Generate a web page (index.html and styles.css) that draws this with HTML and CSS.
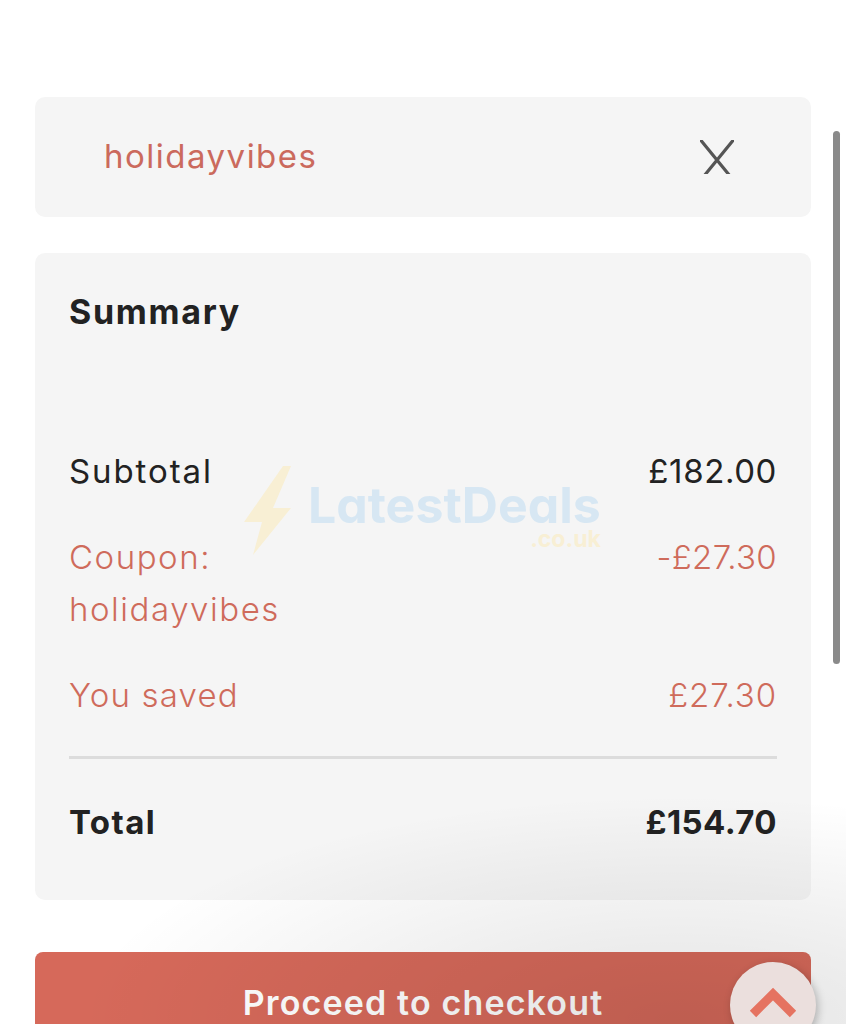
FILE: index.html
```html
<!DOCTYPE html>
<html lang="en">
<head>
<meta charset="utf-8">
<title>Summary</title>
<link rel="stylesheet" href="styles.css">
</head>
<body>
<main class="page">
  <section class="card coupon">
    <span class="coupon-code">holidayvibes</span>
    <svg class="close" viewBox="0 0 34 34" aria-label="Remove"><path d="M-1 -2 L30 36 M35 -2 L4 36"/></svg>
  </section>
  <section class="card summary">
    <h2 class="title">Summary</h2>
    <div class="rows">
      <div class="row"><span class="sub-label">Subtotal</span><span class="sub-val">£182.00</span></div>
      <div class="row accent"><span class="coupon-label">Coupon:<br>holidayvibes</span><span class="discount">-£27.30</span></div>
      <div class="row accent"><span class="saved-label">You saved</span><span class="saved-val">£27.30</span></div>
    </div>
    <hr class="rule">
    <div class="row total"><span class="total-label">Total</span><span class="total-val">£154.70</span></div>
  </section>
  <button class="checkout">Proceed to checkout</button>
</main>
<div class="scrollbar"></div>
<div class="watermark">
  <svg class="bolt" viewBox="0 0 47 90"><path d="M39 1 L47 1 L29 43 L47 43 L9 90 L18 57 L0 57 Z"/></svg>
  <div class="wm-text"><span class="wm-name">LatestDeals</span><span class="wm-tld">.co.uk</span></div>
</div>
<div class="shade"></div>
<div class="to-top">
  <svg viewBox="0 0 48 32"><path d="M4 28 L24 8 L44 28"/></svg>
</div>
</body>
</html>
```
FILE: styles.css
```css
html, body {
  margin: 0;
  height: 100%;
  overflow: hidden;
  background: #fff;
}
body {
  position: relative;
  font-family: Inter, "Open Sans", sans-serif;
  color: #222;
}
.page {
  padding: 97px 35px 0;
  display: flex;
  flex-direction: column;
}
.card {
  background: #f5f5f5;
  border-radius: 10px;
}
.coupon {
  height: 120px;
  display: flex;
  align-items: center;
  justify-content: space-between;
  padding: 0 77px 0 69px;
  box-sizing: border-box;
}
.coupon-code {
  font-size: 33px;
  font-weight: 400;
  letter-spacing: 1.5px;
  color: #cb6a5d;
  position: relative;
  top: -1px;
}
.close {
  width: 34px;
  height: 34px;
  fill: none;
  stroke: #555;
  stroke-width: 3.2;
  overflow: hidden;
}
.summary {
  margin-top: 36px;
  height: 647px;
  box-sizing: border-box;
  padding: 33px 34px 0;
}
.title {
  margin: 0;
  font-size: 34px;
  line-height: 52px;
  font-weight: 700;
  letter-spacing: 1.7px;
  color: #222;
}
.rows {
  margin-top: 107px;
  display: flex;
  flex-direction: column;
  gap: 34px;
}
.row {
  display: flex;
  justify-content: space-between;
  font-size: 33px;
  line-height: 52px;
  font-weight: 300;
  color: #222;
}
.sub-label { font-weight: 400; letter-spacing: 1.9px; }
.sub-val { font-weight: 400; letter-spacing: 0.6px; }
.accent { color: #cf6b5b; }
.coupon-label { letter-spacing: 1.55px; }
.saved-label { letter-spacing: 1.2px; }
.discount { letter-spacing: 0.3px; }
.saved-val { letter-spacing: 0.9px; }
.rule {
  margin: 35px 0 0;
  border: 0;
  height: 3px;
  background: #dcdcdc;
}
.total {
  margin-top: 37px;
  font-weight: 700;
}
.total-label { letter-spacing: 1.4px; }
.total-val { letter-spacing: 0.4px; }
.checkout {
  margin-top: 52px;
  height: 110px;
  border: 0;
  border-radius: 8px;
  background: #d6695a;
  color: #fff;
  font: 600 34px Inter, sans-serif;
  letter-spacing: 1.15px;
  padding: 0 0 9px;
  display: block;
  width: 100%;
}
.scrollbar {
  position: absolute;
  left: 833px;
  top: 131px;
  width: 7px;
  height: 533px;
  border-radius: 4px;
  background: #8a8a8a;
}
.watermark {
  position: absolute;
  left: 244px;
  top: 465px;
  display: flex;
  gap: 17px;
}
.bolt {
  flex: none;
  width: 47px;
  height: 90px;
  fill: #f8efd4;
}
.wm-text {
  display: flex;
  flex-direction: column;
  align-items: flex-end;
  margin-top: 19px;
}
.wm-name {
  font-size: 50px;
  line-height: 42px;
  font-weight: 700;
  font-feature-settings: "cv11";
  color: #d7e7f3;
  white-space: nowrap;
}
.wm-tld {
  font-size: 23px;
  line-height: 18px;
  margin-top: 4px;
  font-weight: 700;
  color: #f8efd4;
}
.shade {
  position: absolute;
  left: 0;
  top: 0;
  right: 0;
  bottom: 0;
  pointer-events: none;
  background: radial-gradient(ellipse 600px 225px at 680px 1020px, rgba(0,0,0,0.11), rgba(0,0,0,0.05) 55%, rgba(0,0,0,0) 100%);
}
.to-top {
  position: absolute;
  left: 730px;
  top: 962px;
  width: 86px;
  height: 86px;
  border-radius: 50%;
  background: #ebdfdd;
  box-shadow: 2px 3px 8px rgba(0,0,0,0.25);
  display: flex;
  justify-content: center;
  padding-top: 24px;
  box-sizing: border-box;
}
.to-top svg {
  flex: none;
  width: 48px;
  height: 32px;
  fill: none;
  stroke: #e57361;
  stroke-width: 9;
}
```
